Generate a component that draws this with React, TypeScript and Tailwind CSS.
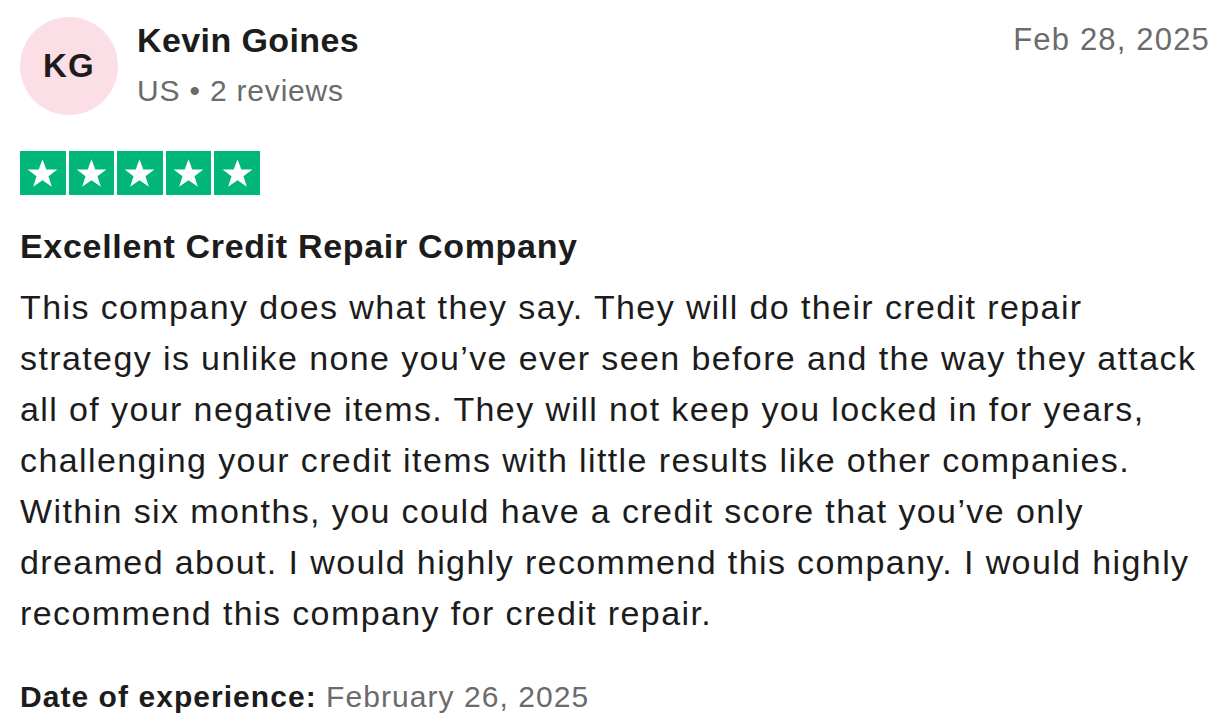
import React from "react";

const Star = () => (
  <div className="flex h-[44px] w-[45.6px] items-center justify-center bg-[#00b67a]">
    <svg viewBox="0 0 24 24" className="h-[35px] w-[35px]" fill="#ffffff">
      <path d="M12 2.2l2.6 7.1h7.6l-6.1 4.5 2.3 7.3L12 16.6l-6.4 4.5 2.3-7.3-6.1-4.5h7.6z" />
    </svg>
  </div>
);

export default function App() {
  return (
    <div
      className="min-h-screen bg-white px-[20px] pt-[17px] text-[#1c1c1c]"
      style={{ fontFamily: '"Liberation Sans", Arial, sans-serif' }}
    >
      {/* Header */}
      <div className="flex items-start justify-between">
        <div className="flex items-start">
          <div className="flex h-[98px] w-[98px] items-center justify-center rounded-full bg-[#fcdfe6] text-[33px] font-bold tracking-[0.04em]">
            KG
          </div>
          <div className="ml-[19px]">
            <div className="text-[34px] font-bold leading-[46px] tracking-[0.012em]">Kevin Goines</div>
            <div className="mt-[8px] text-[30px] leading-[40px] tracking-[0.027em] text-[#6b6b6b]">
              US • 2 reviews
            </div>
          </div>
        </div>
        <div className="text-[31px] leading-[46px] tracking-[0.038em] text-[#6b6b6b]">Feb 28, 2025</div>
      </div>

      {/* Rating */}
      <div className="mt-[36px] flex gap-[3px]">
        <Star />
        <Star />
        <Star />
        <Star />
        <Star />
      </div>

      {/* Review */}
      <h2 className="mt-[28px] text-[34px] font-bold leading-[46px] tracking-[0.02em]">
        Excellent Credit Repair Company
      </h2>
      <p className="mt-[13px] text-[34px] leading-[51px] tracking-[0.041em]">
        This company does what they say. They will do their credit repair strategy is unlike none you’ve ever seen
        before and the way they attack all of your negative items. They will not keep you locked in for years,
        challenging your credit items with little results like other companies. Within six months, you could have a
        credit score that you’ve only dreamed about. I would highly recommend this company. I would highly recommend
        this company for credit repair.
      </p>

      <div className="mt-[38px] text-[30px] leading-[40px] tracking-[0.035em]">
        <span className="font-bold">Date of experience:</span>{" "}
        <span className="text-[#6b6b6b]">February 26, 2025</span>
      </div>
    </div>
  );
}
